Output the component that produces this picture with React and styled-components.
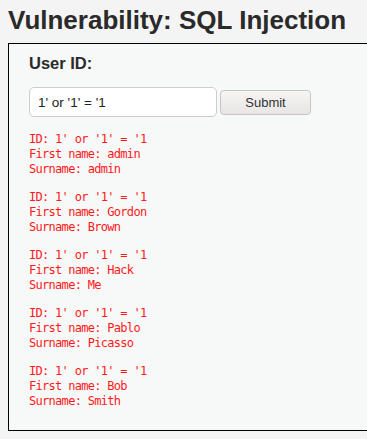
import React from "react";
import styled, { createGlobalStyle } from "styled-components";

const Global = createGlobalStyle`
  html, body { margin: 0; padding: 0; background: #f4f4f4; overflow: hidden; }
  body { font-family: "Liberation Sans", Arial, sans-serif; color: #2a2a2a; }
`;

const Page = styled.div`
  padding: 5px 0 0 8px;
  width: 359px;
`;

const Title = styled.h1`
  margin: 0 0 8px 0;
  font-size: 26px;
  line-height: 30px;
  font-weight: bold;
  color: #2a2a2a;
`;

const Area = styled.div`
  border: 1px solid #000;
  border-right: none;
  background: #f7f8f8;
  padding: 8px 0 20px 20px;
  height: 358px;
  box-sizing: content-box;
`;

const Label = styled.div`
  font-size: 16.5px;
  font-weight: bold;
  line-height: 20px;
  margin: 1px 0 14px 0;
  color: #2a2a2a;
`;

const FormRow = styled.form`
  display: flex;
  align-items: center;
  gap: 3px;
  margin-bottom: 15px;
`;

const Input = styled.input`
  width: 188px;
  height: 30px;
  box-sizing: border-box;
  border: 1px solid #cdcdcd;
  border-radius: 5px;
  background: #fff;
  padding: 0 8px;
  font-family: "Liberation Sans", Arial, sans-serif;
  font-size: 13.5px;
  color: #222;
  outline: none;
`;

const Button = styled.button`
  width: 91px;
  height: 25px;
  box-sizing: border-box;
  border: 1px solid #c6c6c6;
  border-radius: 4px;
  background: linear-gradient(#f6f5f4, #e8e6e4);
  font-family: "Liberation Sans", Arial, sans-serif;
  font-size: 13px;
  color: #333;
  padding: 0;
`;

const Result = styled.pre`
  margin: 0 0 13px 0;
  font-family: "DejaVu Sans Mono", monospace;
  font-size: 12px;
  letter-spacing: -0.7px;
  line-height: 15px;
  color: #ff1a1a;
`;

const rows = [
  ["admin", "admin"],
  ["Gordon", "Brown"],
  ["Hack", "Me"],
  ["Pablo", "Picasso"],
  ["Bob", "Smith"],
];

export default function App() {
  return (
    <>
      <Global />
      <Page>
        <Title>Vulnerability: SQL Injection</Title>
        <Area>
          <Label>User ID:</Label>
          <FormRow onSubmit={(e) => e.preventDefault()}>
            <Input defaultValue="1' or '1' = '1" />
            <Button type="submit">Submit</Button>
          </FormRow>
          {rows.map(([f, s], i) => (
            <Result key={i}>{`ID: 1' or '1' = '1\nFirst name: ${f}\nSurname: ${s}`}</Result>
          ))}
        </Area>
      </Page>
    </>
  );
}
